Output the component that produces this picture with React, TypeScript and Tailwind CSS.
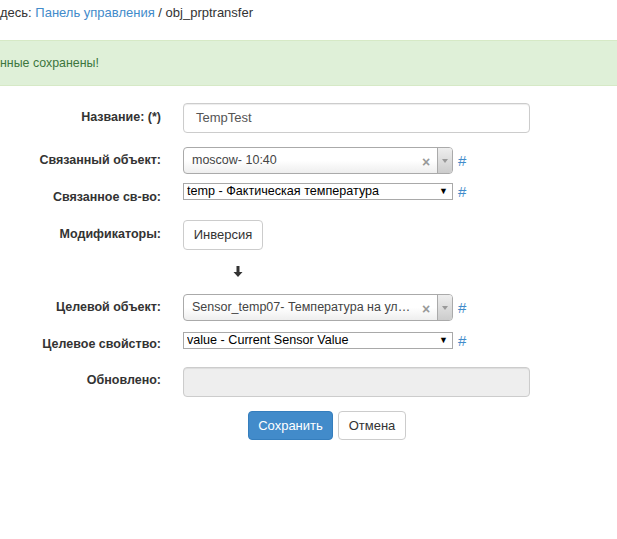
import React from "react"

function Hash() {
  return <a className="ml-[5px] text-[15px] leading-none text-[#428bca]">#</a>
}

function Select2({ value }: { value: string }) {
  return (
    <div className="flex items-center">
      <div className="flex h-[27px] w-[270px] items-stretch overflow-hidden rounded-[4px] border border-[#aaa] bg-gradient-to-b from-white from-50% to-[#eee]">
        <span className="min-w-0 flex-1 truncate pl-[8px] pt-[4px] text-[12.5px] leading-[17px] text-[#444]">{value}</span>
        <span className="flex w-[22px] items-center justify-center pt-[4px] text-[14px] font-bold text-[#999]">×</span>
        <span className="flex w-[15px] items-center justify-center border-l border-[#aaa] bg-gradient-to-b from-[#eee] to-[#ccc]">
          <span className="h-0 w-0 border-x-[3px] border-t-[4px] border-x-transparent border-t-[#999]" />
        </span>
      </div>
      <Hash />
    </div>
  )
}

function NativeSelect({ value }: { value: string }) {
  return (
    <div className="flex items-center">
      <div className="flex h-[17px] w-[270px] items-center border border-[#a9a9a9] bg-white pl-[3px] pr-[4px]">
        <span className="flex-1 truncate text-[12.6px] leading-[15px] text-black">{value}</span>
        <span className="text-[9px] leading-none text-black">▼</span>
      </div>
      <Hash />
    </div>
  )
}

function Row({ label, pt, children, className = "" }: { label: string; pt: string; children: React.ReactNode; className?: string }) {
  return (
    <div className={`flex items-start ${className}`}>
      <label className={`w-[161px] text-right text-[12.5px] font-bold leading-[18px] text-[#333] ${pt}`}>{label}</label>
      <div className="ml-[22px]">{children}</div>
    </div>
  )
}

export default function App() {
  return (
    <div className="h-[539px] w-[617px] overflow-hidden bg-white font-['Liberation_Sans',Arial,sans-serif] text-[13px] text-[#333]">
      <div className="h-[40px] pt-[4px] leading-[18px]">
        <span>десь: </span>
        <a className="text-[#428bca]">Панель управления</a>
        <span> / obj_prptransfer</span>
      </div>

      <div className="flex h-[46px] items-center border-y border-[#d6e9c6] bg-[#dff0d8] text-[12.4px] text-[#3c763d]">
        нные сохранены!
      </div>

      <div className="pt-[17px]">
        <Row label="Название: (*)" pt="pt-[5px]">
          <div className="flex h-[30px] w-[347px] items-center rounded-[4px] border border-[#ccc] px-[12px] text-[13px] text-[#555] shadow-[inset_0_1px_1px_rgba(0,0,0,0.075)]">
            TempTest
          </div>
        </Row>

        <Row label="Связанный объект:" pt="pt-[4px]" className="mt-[14px]">
          <Select2 value="moscow- 10:40" />
        </Row>

        <Row label="Связанное св-во:" pt="pt-[5px]" className="mt-[9px]">
          <NativeSelect value="temp - Фактическая температура" />
        </Row>

        <Row label="Модификаторы:" pt="pt-[5px]" className="mt-[14px]">
          <button className="h-[30px] w-[80px] rounded-[4px] border border-[#ccc] bg-white text-[13px] text-[#333]">
            Инверсия
          </button>
        </Row>

        <div className="mt-[16px] flex h-[10px] pl-[233px]">
          <svg width="10" height="11" viewBox="0 0 10 11">
            <path d="M3.5 0h3v6h3L5 11 0.5 6h3z" fill="#333" />
          </svg>
        </div>

        <Row label="Целевой объект:" pt="pt-[4px]" className="mt-[18px]">
          <Select2 value="Sensor_temp07- Температура на улице" />
        </Row>

        <Row label="Целевое свойство:" pt="pt-[3px]" className="mt-[11px]">
          <NativeSelect value="value - Current Sensor Value" />
        </Row>

        <Row label="Обновлено:" pt="pt-[4px]" className="mt-[14px]">
          <div className="h-[30px] w-[347px] rounded-[4px] border border-[#ccc] bg-[#eee] shadow-[inset_0_1px_1px_rgba(0,0,0,0.075)]" />
        </Row>

        <div className="mt-[14px] flex gap-[5px] pl-[248px]">
          <button className="h-[29px] w-[85px] rounded-[4px] border border-[#357ebd] bg-[#428bca] text-[13px] text-white">
            Сохранить
          </button>
          <button className="h-[29px] w-[68px] rounded-[4px] border border-[#ccc] bg-white text-[13px] text-[#333]">
            Отмена
          </button>
        </div>
      </div>
    </div>
  )
}
